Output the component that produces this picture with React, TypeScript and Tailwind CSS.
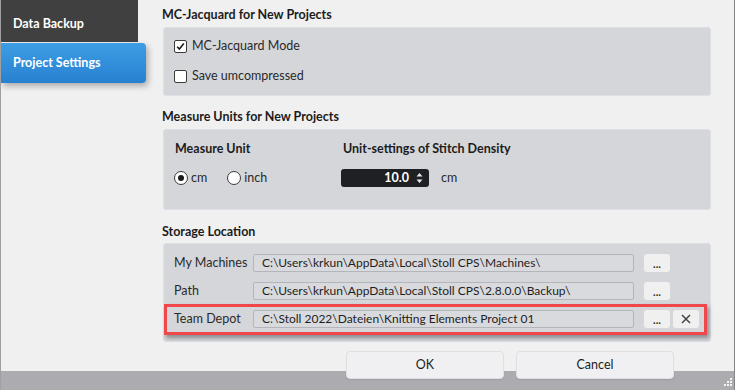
import React from "react";

const font = "font-['Lato',sans-serif]";

function Checkbox({ checked, label }: { checked?: boolean; label: string }) {
  return (
    <div className="flex items-center h-[14px]">
      <div className="w-[13px] h-[13px] rounded-[2px] border border-[#3a3a3a] bg-white flex items-center justify-center">
        {checked && (
          <svg width="11" height="11" viewBox="0 0 11 11">
            <path d="M2.2 5.8 L4.4 8 L8.8 2.6" fill="none" stroke="#1a1a1a" strokeWidth="1.6" />
          </svg>
        )}
      </div>
      <span className="ml-[5px] text-[12.5px] text-[#2a2a2a]">{label}</span>
    </div>
  );
}

function Radio({ checked, label }: { checked?: boolean; label: string }) {
  return (
    <div className="flex items-center h-[18px]">
      <div className="w-[14px] h-[14px] rounded-full border border-[#3a3a3a] bg-white flex items-center justify-center">
        {checked && <div className="w-[6px] h-[6px] rounded-full bg-[#1a1a1a]" />}
      </div>
      <span className="ml-[3px] text-[12.5px] text-[#2a2a2a]">{label}</span>
    </div>
  );
}

function PathRow({ label, path, clear }: { label: string; path: string; clear?: boolean }) {
  return (
    <div className="flex items-center h-[18px]">
      <span className="w-[79px] text-[12.5px] text-[#2a2a2a] whitespace-nowrap">{label}</span>
      <div className="w-[381px] h-[18px] rounded-[2px] border border-[#b4b5ba] bg-[#d9dadd] pl-[8px] flex items-center text-[12px] text-[#1e1e1e] whitespace-nowrap overflow-hidden">
        {path}
      </div>
      <button className="ml-[10px] w-[26px] h-[18px] rounded-[3px] bg-[#f0f0f1] text-[11px] font-bold leading-none text-[#333] flex items-end justify-center pb-[3px]">
        ...
      </button>
      {clear && (
        <button className="ml-[3px] w-[26px] h-[18px] rounded-[3px] bg-[#f0f0f1] flex items-center justify-center">
          <svg width="10" height="10" viewBox="0 0 10 10">
            <path d="M1 1 L9 9 M9 1 L1 9" stroke="#444" strokeWidth="1.5" />
          </svg>
        </button>
      )}
    </div>
  );
}

export default function App() {
  return (
    <div className={`${font} w-[735px] h-[390px] flex flex-col bg-[#f0f0f0] border-l border-l-[#a0a0a0] border-r border-r-[#858585] overflow-hidden`}>
      <div className="flex h-[351px]">
        {/* Sidebar */}
        <aside className="w-[145px] shrink-0">
          <div className="w-[137px] h-[42px] bg-[#404040] flex items-center pl-[12px] pt-[7px] text-[12.5px] font-bold text-white">
            Data Backup
          </div>
          <div className="mt-[1px] h-[40px] rounded-r-[4px] bg-[linear-gradient(to_bottom,#3d9ee4,#2880d0)] shadow-[2px_3px_6px_rgba(0,0,0,0.3)] flex items-center pl-[12px] text-[12.5px] font-bold text-white">
            Project Settings
          </div>
        </aside>

        {/* Content */}
        <main className="flex-1 pl-[16px] pt-[5px] text-[#1c1c1c]">
          <h2 className="h-[20px] leading-[20px] text-[12.5px] font-bold mb-[2px]">MC-Jacquard for New Projects</h2>
          <div className="ml-[1px] w-[548px] rounded-[3px] bg-[#d5d6da] border border-[#dce0e6] pt-[11px] pb-[12px] pl-[10px] flex flex-col gap-[16px]">
            <Checkbox checked label="MC-Jacquard Mode" />
            <Checkbox label="Save umcompressed" />
          </div>

          <h2 className="mt-[11px] h-[20px] leading-[20px] text-[12.5px] font-bold mb-[2px]">Measure Units for New Projects</h2>
          <div className="ml-[1px] w-[548px] rounded-[3px] bg-[#d5d6da] border border-[#dce0e6] pt-[10px] pb-[22px] pl-[10px] flex">
            <div className="w-[167px]">
              <div className="h-[18px] leading-[18px] ml-[1px] text-[12.5px] font-bold">Measure Unit</div>
              <div className="mt-[11px] flex items-center gap-[20px]">
                <Radio checked label="cm" />
                <Radio label="inch" />
              </div>
            </div>
            <div>
              <div className="h-[18px] leading-[18px] ml-[2px] text-[12.5px] font-bold">Unit-settings of Stitch Density</div>
              <div className="mt-[11px] flex items-center h-[18px]">
                <div className="w-[88px] h-[18px] rounded-[3px] bg-[#1f2024] flex items-center justify-end pr-[6px]">
                  <span className="text-[12.5px] font-bold text-white leading-none">10.0</span>
                  <svg className="ml-[7px]" width="7" height="12" viewBox="0 0 7 12">
                    <path d="M3.5 1 L6.5 4.5 L0.5 4.5 Z M3.5 11 L6.5 7.5 L0.5 7.5 Z" fill="#e8e8e8" />
                  </svg>
                </div>
                <span className="ml-[12px] text-[12.5px] text-[#2a2a2a]">cm</span>
              </div>
            </div>
          </div>

          <h2 className="mt-[12px] h-[20px] leading-[20px] text-[12.5px] font-bold mb-[1px]">Storage Location</h2>
          <div className="ml-[1px] w-[548px] rounded-[3px] bg-[#d5d6da] border border-[#dce0e6] pt-[10px] pb-[6px] flex flex-col">
            <div className="pl-[10px]">
              <PathRow label="My Machines" path="C:\Users\krkun\AppData\Local\Stoll CPS\Machines\" />
            </div>
            <div className="pl-[10px] mt-[10px]">
              <PathRow label="Path" path="C:\Users\krkun\AppData\Local\Stoll CPS\2.8.0.0\Backup\" />
            </div>
            <div className="mt-[4px] w-[543px] border-[3px] border-[#f0474a] pl-[7px] pt-[3px] pb-[4px] shadow-[2px_3px_4px_rgba(0,0,0,0.35)]">
              <PathRow label="Team Depot" path="C:\Stoll 2022\Dateien\Knitting Elements Project 01" clear />
            </div>
          </div>
        </main>
      </div>

      {/* Footer */}
      <div className="h-[39px] flex bg-[linear-gradient(to_bottom,#f0f0f0_20px,#acacb0_20px)]">
        <div className="flex-1" />
        <div className="flex gap-[12px]">
          <button className="w-[158px] h-[28px] rounded-[4px] bg-[#f0f0f2] border border-[#e0e0e4] shadow-[0_1px_1px_rgba(0,0,0,0.08)] text-[12.5px] text-[#1c1c1c]">
            OK
          </button>
          <button className="w-[158px] h-[28px] rounded-[4px] bg-[#f0f0f2] border border-[#e0e0e4] shadow-[0_1px_1px_rgba(0,0,0,0.08)] text-[12.5px] text-[#1c1c1c]">
            Cancel
          </button>
        </div>
        <div className="w-[60px] flex items-end justify-end pr-[2px] pb-[2px]">
          <svg width="10" height="10" viewBox="0 0 10 10">
            <g fill="#f4f4f4">
              <rect x="8" y="0" width="2" height="2" />
              <rect x="5" y="3" width="2" height="2" />
              <rect x="8" y="3" width="2" height="2" />
              <rect x="2" y="6" width="2" height="2" />
              <rect x="5" y="6" width="2" height="2" />
              <rect x="8" y="6" width="2" height="2" />
            </g>
          </svg>
        </div>
      </div>
    </div>
  );
}
